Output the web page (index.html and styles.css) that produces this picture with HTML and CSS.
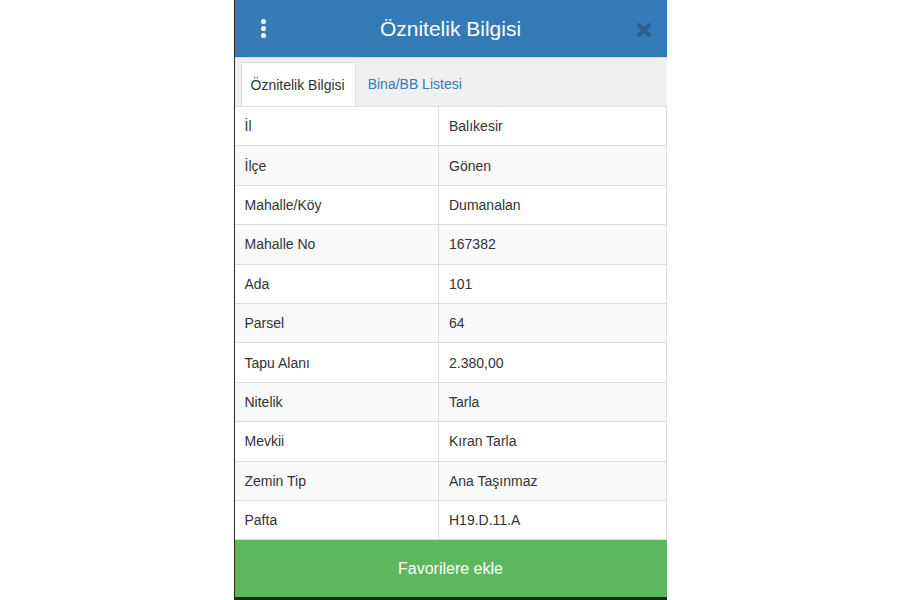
FILE: index.html
```html
<!DOCTYPE html>
<html lang="tr">
	<head>
		<meta charset="UTF-8" />
		<meta name="viewport" content="width=device-width, initial-scale=1.0" />
		<title>Öznitelik Bilgisi</title>
		<link rel="stylesheet" href="styles.css">
	</head>
	<body>
		<div class="panel">
			<div class="panel-header">
				<button class="menu-btn">
					<span></span><span></span><span></span>
				</button>
				<h1>Öznitelik Bilgisi</h1>
				<button class="close-btn">
					<svg width="16" height="16" viewBox="0 0 16 16">
						<path d="M3 3 L13 13 M13 3 L3 13" stroke="#2c5f8d" stroke-width="4" stroke-linecap="round" />
					</svg>
				</button>
			</div>
			<ul class="tabs">
				<li class="active">Öznitelik Bilgisi</li>
				<li>Bina/BB Listesi</li>
			</ul>
			<table class="info-table">
				<tr><td>İl</td><td>Balıkesir</td></tr>
				<tr><td>İlçe</td><td>Gönen</td></tr>
				<tr><td>Mahalle/Köy</td><td>Dumanalan</td></tr>
				<tr><td>Mahalle No</td><td>167382</td></tr>
				<tr><td>Ada</td><td>101</td></tr>
				<tr><td>Parsel</td><td>64</td></tr>
				<tr><td>Tapu Alanı</td><td>2.380,00</td></tr>
				<tr><td>Nitelik</td><td>Tarla</td></tr>
				<tr><td>Mevkii</td><td>Kıran Tarla</td></tr>
				<tr><td>Zemin Tip</td><td>Ana Taşınmaz</td></tr>
				<tr><td>Pafta</td><td>H19.D.11.A</td></tr>
			</table>
			<button class="fav-btn">Favorilere ekle</button>
			<div class="map-strip"></div>
		</div>
	</body>
</html>
```

FILE: styles.css
```css
* {
	box-sizing: border-box;
}
body {
	margin: 0;
	background: #fff;
	font-family: "Liberation Sans", Arial, sans-serif;
	color: #333;
}
.panel {
	width: 433px;
	height: 600px;
	margin: 0 auto;
	display: flex;
	flex-direction: column;
	border-left: 1px solid #2a2a2a;
	background: #fff;
}

.panel-header {
	height: 57px;
	background-color: #337ab7;
	display: flex;
	align-items: center;
	padding: 0 15px 0 19px;
}
.panel-header h1 {
	flex: 1;
	margin: 0;
	text-align: center;
	color: #fff;
	font-size: 21px;
	font-weight: normal;
}
.panel-header button {
	appearance: none;
	border: none;
	background: none;
	padding: 0;
	cursor: pointer;
}
.menu-btn {
	width: 20px;
	display: flex;
	flex-direction: column;
	align-items: center;
	gap: 2px;
}
.menu-btn span {
	width: 5px;
	height: 5px;
	border-radius: 50%;
	background: #fff;
}
.close-btn {
	width: 24px;
	height: 20px;
	display: flex;
	align-items: center;
	justify-content: flex-end;
	margin-top: 2px;
}

.tabs {
	margin: 0;
	padding: 4px 0 0 6px;
	list-style: none;
	display: flex;
	height: 49px;
	background: #f0f0f0;
	border-top: 1px solid #dcdcdc;
}
.tabs li {
	display: flex;
	align-items: center;
	padding: 0 10px 0 9px;
	font-size: 14px;
	color: #337ab7;
	margin-right: 3px;
	cursor: pointer;
}
.tabs li.active {
	background: #fff;
	color: #333;
	border: 1px solid #ddd;
	border-bottom: none;
}

.info-table {
	width: 100%;
	border-collapse: collapse;
	font-size: 14px;
}
.info-table td {
	height: 39.4px;
	padding: 0 10px;
	border: 1px solid #dedede;
	border-left: none;
}
.info-table td:first-child {
	width: 204px;
}
.info-table tr:nth-child(even) td {
	background: #f9f9f9;
}

.fav-btn {
	appearance: none;
	border: none;
	height: 57px;
	background-color: #5cb85c;
	color: #fff;
	font-family: inherit;
	font-size: 16px;
	cursor: pointer;
	flex-shrink: 0;
}
.map-strip {
	flex: 1;
	background: #1e2a18;
}
```
